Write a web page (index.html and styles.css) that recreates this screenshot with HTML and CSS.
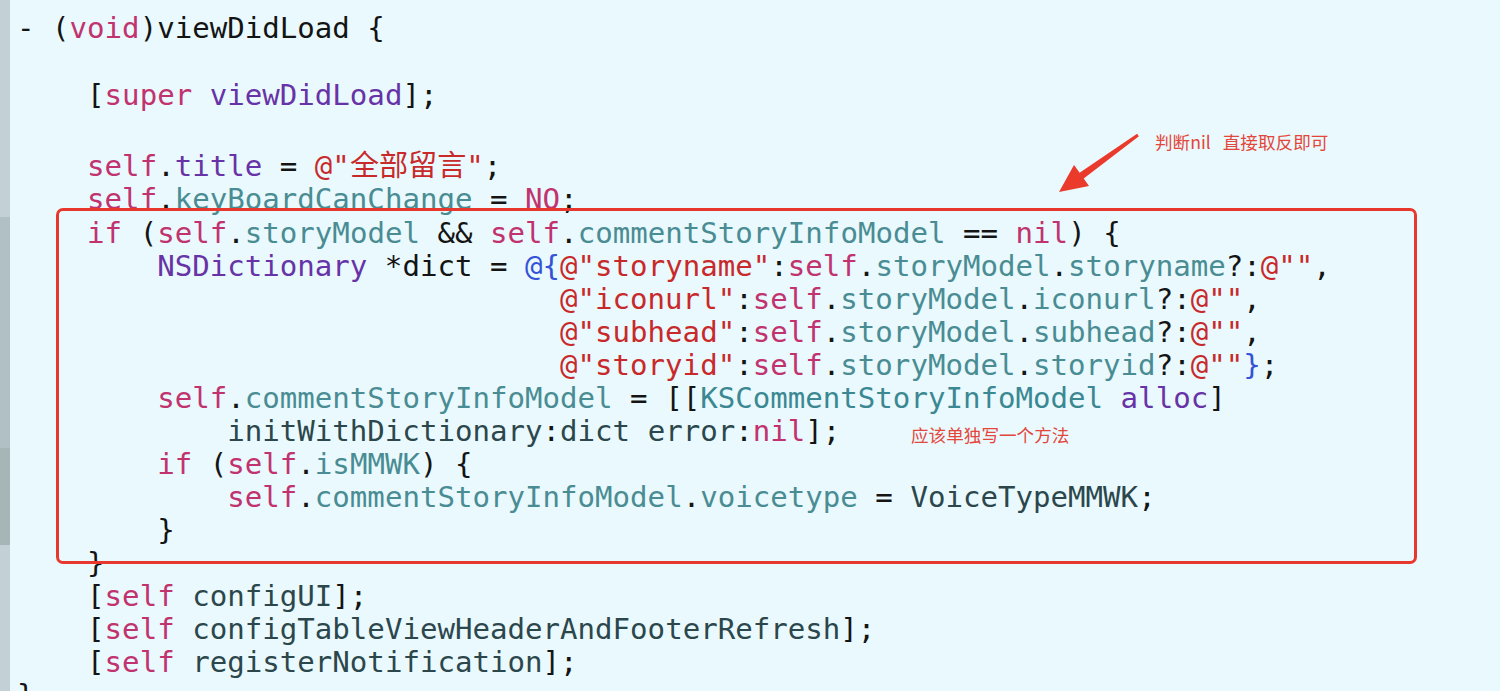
FILE: index.html
```html
<!DOCTYPE html>
<html>
<head>
<meta charset="utf-8">
<link rel="stylesheet" href="styles.css">
</head>
<body>
<div class="page">
  <div class="gutter">
    <div class="seg seg-a"></div>
    <div class="seg seg-b"></div>
    <div class="seg seg-c"></div>
    <div class="seg seg-d"></div>
  </div>
  <div class="code">
<div class="ln h34">- (<span class="k">void</span>)viewDidLoad {</div>
<div class="ln h33"> </div>
<div class="ln h34">    [<span class="k">super</span> <span class="y">viewDidLoad</span>];</div>
<div class="ln h34"> </div>
<div class="ln h35">    <span class="k">self</span>.<span class="y">title</span> = <span class="s">@"<span class="cjk">全部留言</span>"</span>;</div>
<div class="ln h36">    <span class="k">self</span>.<span class="p">keyBoardCanChange</span> = <span class="k">NO</span>;</div>
<div class="ln">    <span class="k">if</span> (<span class="k">self</span>.<span class="p">storyModel</span> &amp;&amp; <span class="k">self</span>.<span class="p">commentStoryInfoModel</span> == <span class="k">nil</span>) {</div>
<div class="ln">        <span class="y">NSDictionary</span> *dict = <span class="b">@{</span><span class="s">@"storyname"</span>:<span class="k">self</span>.<span class="p">storyModel</span>.<span class="p">storyname</span>?:<span class="s">@""</span>,</div>
<div class="ln">                               <span class="s">@"iconurl"</span>:<span class="k">self</span>.<span class="p">storyModel</span>.<span class="p">iconurl</span>?:<span class="s">@""</span>,</div>
<div class="ln">                               <span class="s">@"subhead"</span>:<span class="k">self</span>.<span class="p">storyModel</span>.<span class="p">subhead</span>?:<span class="s">@""</span>,</div>
<div class="ln">                               <span class="s">@"storyid"</span>:<span class="k">self</span>.<span class="p">storyModel</span>.<span class="p">storyid</span>?:<span class="s">@""</span><span class="b">}</span>;</div>
<div class="ln">        <span class="k">self</span>.<span class="p">commentStoryInfoModel</span> = [[<span class="c">KSCommentStoryInfoModel</span> <span class="y">alloc</span>]</div>
<div class="ln">            <span class="m">initWithDictionary</span>:<span class="m">dict</span> <span class="m">error</span>:<span class="k">nil</span>];</div>
<div class="ln">        <span class="k">if</span> (<span class="k">self</span>.<span class="p">isMMWK</span>) {</div>
<div class="ln">            <span class="k">self</span>.<span class="p">commentStoryInfoModel</span>.<span class="p">voicetype</span> = <span class="m">VoiceTypeMMWK</span>;</div>
<div class="ln">        }</div>
<div class="ln">    }</div>
<div class="ln">    [<span class="k">self</span> <span class="m">configUI</span>];</div>
<div class="ln">    [<span class="k">self</span> <span class="m">configTableViewHeaderAndFooterRefresh</span>];</div>
<div class="ln">    [<span class="k">self</span> <span class="m">registerNotification</span>];</div>
<div class="ln">}</div>
  </div>

  <div class="redbox"></div>

  <svg class="arrow" width="100" height="80" viewBox="0 0 100 80" xmlns="http://www.w3.org/2000/svg">
    <polygon points="9,67 39,61 33.7,53.4 88.9,11.2 87.1,8.8 29.6,47.8 24,40" fill="#ea3a2c"/>
  </svg>

  <div class="note note-top">判断nil<span class="gap">直接取反即可</span></div>
  <div class="note note-mid">应该单独写一个方法</div>
</div>
</body>
</html>
```

FILE: styles.css
```css
html, body {
  margin: 0;
  padding: 0;
  background: #e9f9fd;
  overflow: hidden;
}

.page {
  position: relative;
  width: 1500px;
  height: 691px;
  display: flex;
  overflow: hidden;
}

.gutter {
  width: 10px;
  flex: none;
  display: flex;
  flex-direction: column;
}

.seg-a { height: 217px; background: #c3d1d6; }
.seg-b { height: 231px; background: #b0c0c5; }
.seg-c { height: 97px; background: #a6b6b7; }
.seg-d { flex: 1; background: #c3d1d6; }

.code {
  padding: 11px 0 0 7px;
  font-family: "DejaVu Sans Mono", "Liberation Mono", "Noto Sans CJK SC", monospace;
  font-size: 29.1px;
  color: #141414;
}

.ln {
  white-space: pre;
  height: 33px;
  line-height: 33px;
}

.ln.h33 { height: 33px; line-height: 33px; }
.ln.h34 { height: 34px; line-height: 34px; }
.ln.h35 { height: 35px; line-height: 35px; }
.ln.h36 { height: 36px; line-height: 36px; }

.k { color: #c1336f; }
.s { color: #c8292a; }
.p { color: #4a8c93; }
.y { color: #6733a6; }
.c { color: #3b8893; }
.m { color: #2c474c; }
.b { color: #3452d6; }

.cjk {
  font-family: "Noto Sans CJK SC", sans-serif;
  letter-spacing: 0;
}

.redbox {
  position: absolute;
  left: 56px;
  top: 208px;
  width: 1361px;
  height: 356px;
  box-sizing: border-box;
  border: 3px solid #e8372c;
  border-radius: 7px;
}

.arrow {
  position: absolute;
  left: 1050px;
  top: 125px;
}

.note {
  position: absolute;
  font-family: "Noto Sans CJK SC", sans-serif;
  font-size: 17.6px;
  line-height: 20px;
  color: #e4463b;
  white-space: nowrap;
}

.gap {
  margin-left: 12px;
}

.note-top {
  left: 1155px;
  top: 132px;
}

.note-mid {
  left: 911px;
  top: 425px;
}
```
